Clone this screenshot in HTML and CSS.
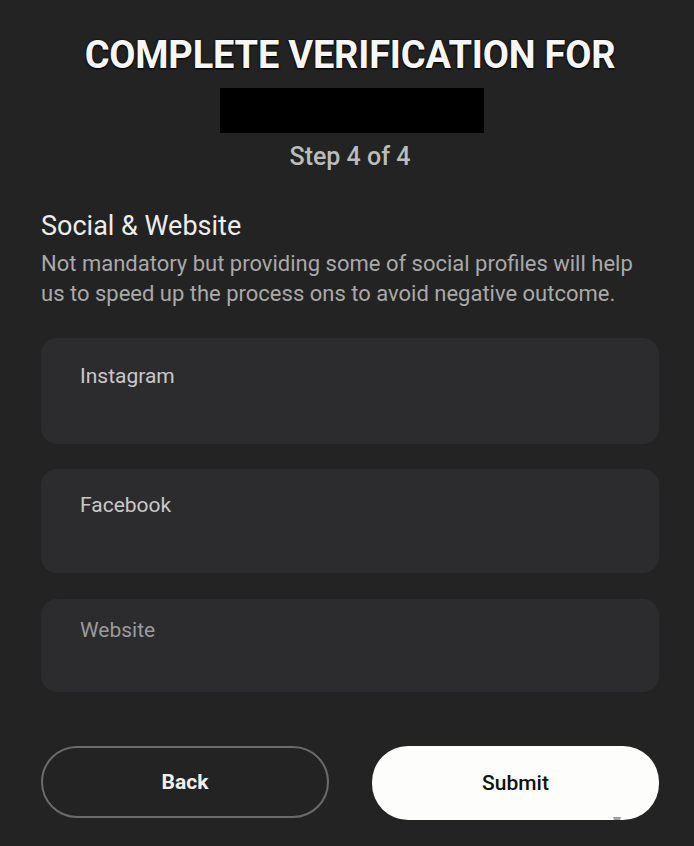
FILE: index.html
```html
<!DOCTYPE html>
<html>
<head>
<meta charset="UTF-8">
<title>Complete verification</title>
<link rel="stylesheet" href="styles.css">
</head>
<body>
<div class="page">
  <div class="head">
    <h1>COMPLETE VERIFICATION FOR</h1>
    <div class="redacted"></div>
    <div class="step">Step 4 of 4</div>
  </div>

  <h2>Social &amp; Website</h2>
  <p class="note">Not mandatory but providing some of social profiles will help us to speed up the process ons to avoid negative outcome.</p>

  <div class="fields">
    <div class="field field-insta"><span class="label">Instagram</span></div>
    <div class="field field-fb"><span class="label">Facebook</span></div>
    <div class="field field-web"><span class="label dim">Website</span></div>
  </div>

  <div class="actions">
    <button class="btn btn-back">Back</button>
    <div class="submit-wrap">
      <button class="btn btn-submit">Submit</button>
      <span class="tail"></span>
    </div>
  </div>
</div>
</body>
</html>
```

FILE: styles.css
```css
html, body {
	margin: 0;
	padding: 0;
	background-color: #232323;
}

body {
	font-family: Roboto, "Liberation Sans", Arial, sans-serif;
	color: #ececec;
}

.page {
	padding: 33px 35px 0 41px;
}

.head {
	display: flex;
	flex-direction: column;
	align-items: center;
}

h1 {
	margin: 0;
	font-size: 38px;
	font-weight: 700;
	line-height: 1.2;
	color: #f6f6f6;
	letter-spacing: -0.2px;
	text-shadow: 0 0 2px #000, 0 1px 2px #000;
}

.redacted {
	width: 264px;
	height: 45px;
	margin: 9px 0 0 4px;
	background-color: #000;
}

.step {
	margin-top: 9px;
	font-size: 25px;
	font-weight: 500;
	line-height: 30px;
	color: #bcbcbc;
}

h2 {
	margin: 38px 0 0 0;
	font-size: 27px;
	font-weight: 400;
	line-height: 32px;
	color: #ededed;
}

.note {
	margin: 7px 0 0 0;
	font-size: 22px;
	line-height: 30px;
	color: #a9a9a9;
}

.fields {
	display: flex;
	flex-direction: column;
	margin-top: 29px;
}

.field {
	background-color: #2c2c2e;
	border-radius: 16px;
	padding: 26px 39px 0 39px;
	box-sizing: border-box;
}

.field-insta {
	height: 106px;
}

.field-fb {
	height: 104px;
	margin-top: 25px;
	padding-top: 24px;
}

.field-web {
	height: 93px;
	margin-top: 26px;
	padding-top: 19px;
}

.label {
	font-size: 21px;
	line-height: 24px;
	color: #c9c9c9;
}

.label.dim {
	color: #9b9b9b;
}

.actions {
	display: grid;
	grid-template-columns: 288px 287px;
	column-gap: 43px;
	margin-top: 54px;
}

.btn {
	box-sizing: border-box;
	width: 100%;
	height: 72px;
	border-radius: 36px;
	font-family: Roboto, "Liberation Sans", Arial, sans-serif;
	font-size: 21px;
	font-weight: 500;
	cursor: pointer;
}

.btn-back {
	background: transparent;
	border: 2px solid #6b6b6b;
	color: #f0f0f0;
	font-weight: 700;
}

.submit-wrap {
	position: relative;
}

.btn-submit {
	height: 74px;
	background-color: #fdfdfb;
	border: none;
	color: #111;
}

.tail {
	position: absolute;
	z-index: 1;
	right: 38px;
	top: 71px;
	width: 0;
	height: 0;
	border-left: 4px solid transparent;
	border-right: 4px solid transparent;
	border-top: 12px solid #a0a0a0;
}
```
